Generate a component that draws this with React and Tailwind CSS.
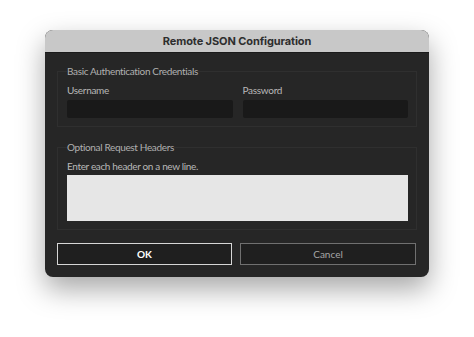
// Remote JSON configuration dialog
export default function App() {
  return (
    <div className="w-[474px] h-[337px] bg-white pt-[30px] pl-[45px]" style={{ fontFamily: 'Lato, "Open Sans", sans-serif' }}>
      <div className="w-[384px] h-[247px] rounded-[8px] overflow-hidden bg-[#262626] shadow-[0_12px_28px_rgba(0,0,0,0.35)] flex flex-col">
        {/* Title bar */}
        <div className="h-[23px] bg-[#c8c8c8] flex items-center justify-center border-b border-[#1a1a1a]">
          <span className="text-[11px] font-bold text-[#2e2e2e] tracking-[-0.1px]" style={{ fontFamily: 'Inter, "Liberation Sans", sans-serif' }}>
            Remote JSON Configuration
          </span>
        </div>

        <div className="flex-1 px-[12px] pt-[11px]">
          {/* Credentials */}
          <fieldset className="border border-[#2f2f2f] pl-[9px] pr-[8px] pb-[8px]">
            <legend className="text-[10px] leading-[14px] tracking-[-0.35px] text-[#b0b0b0] px-0">Basic Authentication Credentials</legend>
            <div className="grid grid-cols-2 gap-[10px] mt-[5px]">
              <div>
                <div className="text-[10px] leading-[14px] tracking-[-0.3px] text-[#b8b8b8]">Username</div>
                <div className="mt-[3px] h-[18px] bg-[#191919] rounded-[2px]" />
              </div>
              <div>
                <div className="text-[10px] leading-[14px] tracking-[-0.3px] text-[#b8b8b8]">Password</div>
                <div className="mt-[3px] h-[18px] bg-[#191919] rounded-[2px]" />
              </div>
            </div>
          </fieldset>

          {/* Headers */}
          <fieldset className="mt-[13px] border border-[#2f2f2f] pl-[9px] pr-[8px] pb-[8px]">
            <legend className="text-[10px] leading-[14px] tracking-[-0.35px] text-[#b0b0b0] px-0">Optional Request Headers</legend>
            <div className="mt-[5px] text-[10px] leading-[14px] tracking-[-0.35px] text-[#b8b8b8]">Enter each header on a new line.</div>
            <div className="mt-[2px] h-[46px] bg-[#e6e6e6]" />
          </fieldset>

          {/* Buttons */}
          <div className="mt-[13px] flex gap-[8px]">
            <button className="w-[175px] h-[22px] border-[1.5px] border-[#d6d6d6] bg-[#1f1f1f] text-[10px] font-bold text-white">
              OK
            </button>
            <button className="w-[176px] h-[22px] border-[1.5px] border-[#707070] bg-[#1f1f1f] text-[10px] text-[#a6a6a6]">
              Cancel
            </button>
          </div>
        </div>
      </div>
    </div>
  );
}
